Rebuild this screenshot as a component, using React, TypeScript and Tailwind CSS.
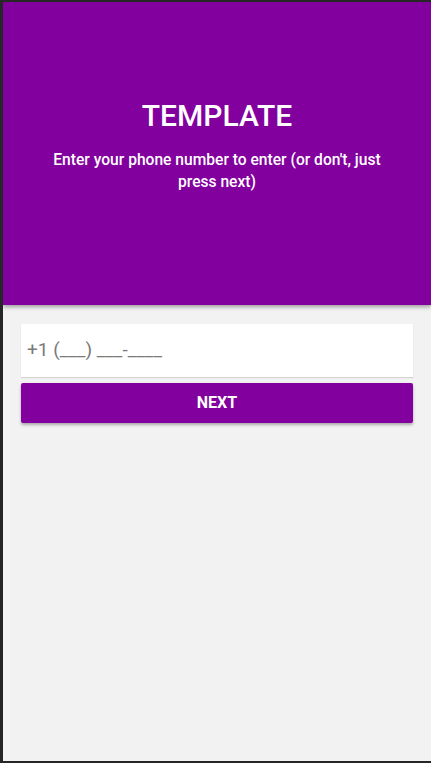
export default function App() {
  return (
    <div className="h-[763px] w-[431px] flex flex-col bg-[#f2f2f2] border-l-[3px] border-t-2 border-b-2 border-[#262626] font-['Roboto',sans-serif] overflow-hidden">
      {/* Header */}
      <header className="h-[303px] shrink-0 bg-[#82009e] flex flex-col items-center pt-[95px] px-[44px] text-white text-center shadow-[0_2px_4px_rgba(0,0,0,0.35)] relative z-10">
        <h1 className="text-[30px] leading-[38px] font-medium">TEMPLATE</h1>
        <p className="mt-[14px] text-[15.6px] leading-[22px] font-medium">
          Enter your phone number to enter (or don't, just press next)
        </p>
      </header>

      {/* Form */}
      <div className="px-[18px] pt-[19px] flex flex-col gap-[6px]">
        <div className="h-[53px] bg-white shadow-[0_1px_1px_rgba(0,0,0,0.12)] flex items-center px-[6px]">
          <span className="text-[19px] text-[#7a7a7a]">+1 (___) ___-____</span>
        </div>
        <button className="h-[40px] w-full bg-[#82009e] rounded-[2px] text-white text-[16px] font-bold shadow-[0_2px_3px_rgba(0,0,0,0.3)]">
          NEXT
        </button>
      </div>
    </div>
  );
}
